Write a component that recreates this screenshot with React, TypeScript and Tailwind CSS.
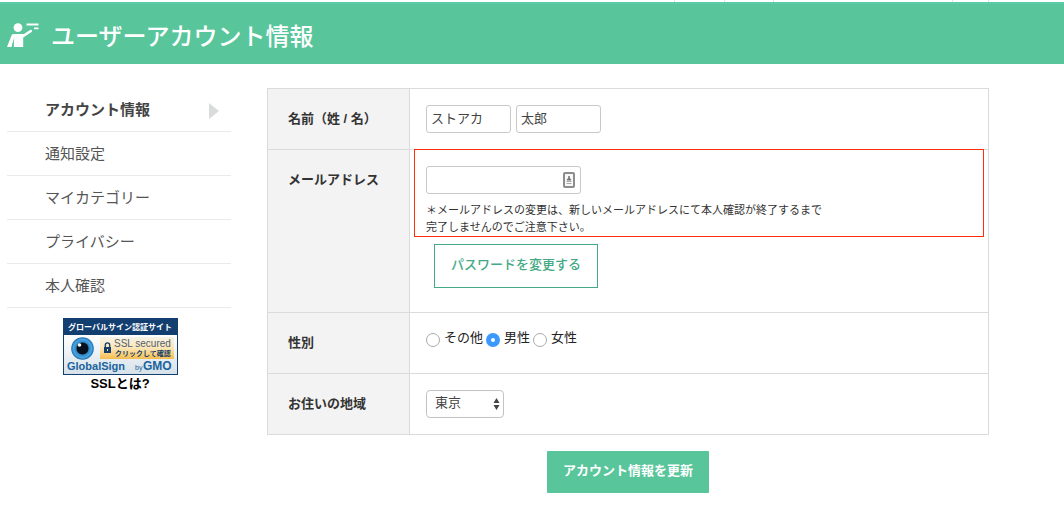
import React, { useState } from 'react';

const MENU = ['アカウント情報', '通知設定', 'マイカテゴリー', 'プライバシー', '本人確認'];

const GENDERS = ['その他', '男性', '女性'];

const PREFECTURES = ['東京', '神奈川', '大阪', '京都'];

const TH_CLASS = 'border-b border-r border-[#dadcdb] bg-[#f3f3f3] py-4 pl-5 text-left align-top leading-7 font-bold';
const TD_CLASS = 'relative border-b border-r border-[#dadcdb] p-4 align-top';
const INPUT_CLASS = 'h-7 rounded-[3px] border border-[#c9c9c9] bg-white px-1 pb-1 text-[#444]';

const TeacherIcon: React.FC = () => (
  <svg width="32" height="25" viewBox="0 0 32 25" fill="#fff" aria-hidden="true">
    <circle cx="11" cy="4.6" r="4.4" />
    <path d="M6.5 11h10.4l6.2-4c1.5-.8 2.7 1 1.5 2.1L16.2 14.6V24H6.6v-7.5L4.6 24H0L4.6 12.2Q5.2 11 6.5 11Z" />
    <path d="M7.2 14.5 4.8 24h1.8z" fill="#58c59b" />
    <path d="M19.5 0.4h12v2h-12zM27 4.4h4.5v1.8H27z" />
  </svg>
);

const SslBadge: React.FC = () => (
  <svg width="115" height="57" viewBox="0 0 115 57" className="block" aria-hidden="true">
    <defs>
      <linearGradient id="badgeBg" x1="0" y1="0" x2="0" y2="1">
        <stop offset="0.3" stopColor="#fff" />
        <stop offset="1" stopColor="#d5e1e8" />
      </linearGradient>
      <linearGradient id="badgeGold" x1="0" y1="0" x2="0" y2="1">
        <stop offset="0" stopColor="#f6f3e8" />
        <stop offset="0.5" stopColor="#fbe6b8" />
        <stop offset="1" stopColor="#f5bd4c" />
      </linearGradient>
      <radialGradient id="badgeEye">
        <stop offset="0.4" stopColor="#1b6fae" />
        <stop offset="0.8" stopColor="#4aa5e2" />
        <stop offset="1" stopColor="#1c6cab" />
      </radialGradient>
    </defs>
    <rect x="0.5" y="0.5" width="114" height="56" fill="url(#badgeBg)" stroke="#123f70" />
    <rect width="115" height="17" fill="#123f70" />
    <text
      x="57"
      y="12"
      textAnchor="middle"
      fontSize="8"
      fontWeight="700"
      fill="#fff"
      fontFamily="Noto Sans CJK JP, sans-serif"
    >
      グローバルサイン認証サイト
    </text>
    <circle cx="19.5" cy="30.5" r="11.3" fill="url(#badgeEye)" />
    <circle cx="19.5" cy="30.5" r="6" fill="#07111d" />
    <circle cx="16.5" cy="27" r="1.8" fill="#fff" />
    <rect x="37" y="19" width="74" height="22" fill="url(#badgeGold)" />
    <rect x="41" y="29" width="7" height="6" fill="#153d69" />
    <path d="M42.3 29v-2a2.2 2.2 0 0 1 4.4 0V29" fill="none" stroke="#153d69" strokeWidth="1.3" />
    <rect x="44" y="31" width="1" height="2" fill="#f9dfa1" />
    <text x="51" y="29" fontSize="10" fontWeight="400" fill="#55606a" fontFamily="Liberation Sans, sans-serif">
      SSL secured
    </text>
    <text x="52" y="38" fontSize="7" fontWeight="700" fill="#153d69" fontFamily="Noto Sans CJK JP, sans-serif">
      クリックして確認
    </text>
    <text x="4" y="52" fontSize="11" fontWeight="700" fill="#1a63a0" fontFamily="Liberation Sans, sans-serif">
      GlobalSign
    </text>
    <text x="72" y="52" fontSize="7" fontWeight="400" fill="#1a63a0" fontFamily="Liberation Sans, sans-serif">by</text>
    <text x="80" y="52" fontSize="12" fontWeight="700" fill="#1a63a0" fontFamily="Liberation Sans, sans-serif">GMO</text>
  </svg>
);

const ContactIcon: React.FC = () => (
  <svg
    width="12"
    height="16"
    viewBox="0 0 12 16"
    className="pointer-events-none absolute top-1.5 right-1.5"
    aria-hidden="true"
  >
    <rect x="1" y="1" width="10" height="14" rx="1" fill="#f8f8f8" stroke="#8c8c8c" strokeWidth="2" />
    <path d="M5.2 4h1.6v2l1.4 1.5v1H3.8v-1L5.2 6z" fill="#777" />
    <path d="M3.5 9.5h5M3.5 11.5h5" stroke="#aaa" />
  </svg>
);

const App: React.FC = () => {
  const [lastName, setLastName] = useState('ストアカ');
  const [firstName, setFirstName] = useState('太郎');
  const [email, setEmail] = useState('');
  const [gender, setGender] = useState('男性');
  const [area, setArea] = useState('東京');

  return (
    <div className="min-h-screen bg-white font-['Liberation_Sans','Noto_Sans_CJK_JP',sans-serif] text-[13px] text-[#333]">
      {/* bottom edge of the global nav */}
      <div className="flex h-0.5 justify-end pr-[75px]">
        <div className="w-[50px] border-l border-[#e3e3e3]" />
        <div className="w-[49px] border-l border-[#e3e3e3]" />
        <div className="w-[179px] border-l border-[#e3e3e3]" />
        <div className="w-[37px] border-x border-[#e3e3e3]" />
      </div>

      <header className="flex h-[62px] items-center gap-3 border-t-2 border-[#5accaa] bg-[#58c59b] pt-0.5 pl-[7px] text-white">
        <TeacherIcon />
        <h1 className="font-['Noto_Sans_CJK_JP',sans-serif] text-2xl font-medium">ユーザーアカウント情報</h1>
      </header>

      <div className="flex items-start gap-9 pt-6 pr-[75px] pl-[7px]">
        <aside className="w-56 shrink-0">
          <nav>
            <ul>
              {MENU.map((item, i) => (
                <li key={item} className="border-b border-[#e9eaea]">
                  <a
                    href="#"
                    className={`flex h-[43px] items-center justify-between pt-0.5 pr-3 pl-[38px] text-[15px] ${
                      i === 0 ? 'font-bold text-[#444]' : 'text-[#555]'
                    }`}
                  >
                    {item}
                    {i === 0 && (
                      <svg width="10" height="16" viewBox="0 0 10 16" fill="#dadcdb" aria-hidden="true">
                        <path d="M0 0l10 8-10 8z" />
                      </svg>
                    )}
                  </a>
                </li>
              ))}
            </ul>
          </nav>
          <a href="#" className="mt-2.5 flex flex-col items-center pl-0.5 font-bold text-black">
            <SslBadge />
            <span className="leading-[18px]">SSLとは?</span>
          </a>
        </aside>

        <form className="min-w-0 flex-1" onSubmit={(e) => e.preventDefault()}>
          <table className="w-full table-fixed border-separate border-spacing-0 border-t border-l border-[#dadcdb]">
            <colgroup>
              <col className="w-[142px]" />
              <col />
            </colgroup>
            <tbody>
              <tr>
                <th scope="row" className={TH_CLASS}>名前（姓 / 名）</th>
                <td className={TD_CLASS}>
                  <div className="flex gap-[5px]">
                    <input
                      type="text"
                      aria-label="姓"
                      className={`${INPUT_CLASS} w-[85px]`}
                      value={lastName}
                      onChange={(e) => setLastName(e.target.value)}
                    />
                    <input
                      type="text"
                      aria-label="名"
                      className={`${INPUT_CLASS} w-[85px]`}
                      value={firstName}
                      onChange={(e) => setFirstName(e.target.value)}
                    />
                  </div>
                </td>
              </tr>
              <tr>
                <th scope="row" className={TH_CLASS}>
                  <label htmlFor="email">メールアドレス</label>
                </th>
                <td className={`${TD_CLASS} pb-6`}>
                  <div className="pointer-events-none absolute -top-px right-1 left-1 h-[88px] border border-[#ff2d0c]" />
                  <div className="relative w-[155px]">
                    <input
                      id="email"
                      type="email"
                      className={`${INPUT_CLASS} block w-full pr-6`}
                      value={email}
                      onChange={(e) => setEmail(e.target.value)}
                    />
                    <ContactIcon />
                  </div>
                  <p className="mt-2 text-[11px] leading-[17px]">
                    ＊メールアドレスの変更は、新しいメールアドレスにて本人確認が終了するまで
                    <br />
                    完了しませんのでご注意下さい。
                  </p>
                  <button
                    type="button"
                    className="mt-2 ml-2 block h-11 border border-[#45a985] px-4 pb-0.5 font-medium text-[#45a985]"
                  >
                    パスワードを変更する
                  </button>
                </td>
              </tr>
              <tr>
                <th scope="row" className={TH_CLASS}>性別</th>
                <td className={TD_CLASS}>
                  <div role="radiogroup" aria-label="性別" className="flex h-7 gap-[3px] leading-[18px] text-[#222]">
                    {GENDERS.map((g) => (
                      <label key={g} className="flex items-start gap-1">
                        <input
                          type="radio"
                          name="gender"
                          value={g}
                          checked={gender === g}
                          onChange={() => setGender(g)}
                          className="mt-1 size-3.5 appearance-none rounded-full border border-[#aaa] bg-white checked:border-5 checked:border-[#3b99fc]"
                        />
                        {g}
                      </label>
                    ))}
                  </div>
                </td>
              </tr>
              <tr>
                <th scope="row" className={TH_CLASS}>
                  <label htmlFor="area">お住いの地域</label>
                </th>
                <td className={TD_CLASS}>
                  <div className="relative w-[78px]">
                    <select
                      id="area"
                      className="block h-7 w-full appearance-none rounded border border-[#c3c3c3] bg-white pb-0.5 pl-2 text-[#444]"
                      value={area}
                      onChange={(e) => setArea(e.target.value)}
                    >
                      {PREFECTURES.map((p) => (
                        <option key={p}>{p}</option>
                      ))}
                    </select>
                    <svg
                      width="7"
                      height="12"
                      viewBox="0 0 7 12"
                      fill="#444"
                      className="pointer-events-none absolute top-2 right-1"
                      aria-hidden="true"
                    >
                      <path d="M3.5 0L6.5 5h-6zM3.5 12L.5 7h6z" />
                    </svg>
                  </div>
                </td>
              </tr>
            </tbody>
          </table>
          <button
            type="submit"
            className="mx-auto mt-4 block h-[42px] rounded-[1px] bg-[#58c59b] px-4 pb-0.5 font-bold text-white"
          >
            アカウント情報を更新
          </button>
        </form>
      </div>
    </div>
  );
};

export default App;
